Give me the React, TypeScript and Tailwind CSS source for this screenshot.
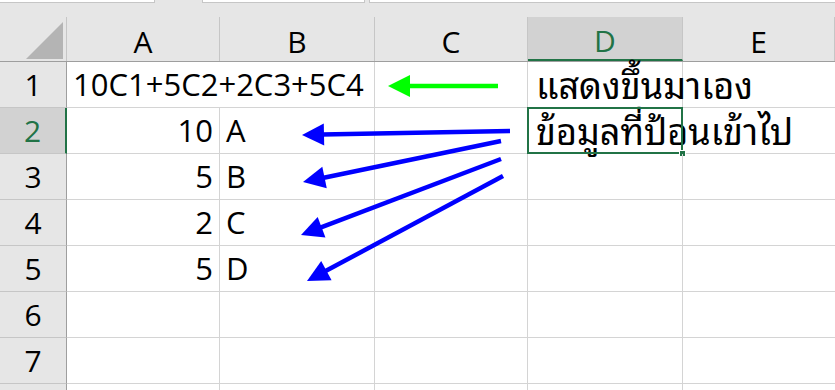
const font = { fontFamily: '"Open Sans", "Noto Sans Thai", "Noto Sans", Tahoma, sans-serif' };
const thaiFont = {
  fontFamily: '"Noto Sans Thai Looped", Tahoma, "Leelawadee UI", Loma, Garuda, "Noto Sans Thai", sans-serif',
};

const cols = ['A', 'B', 'C', 'D', 'E'];

type Row = { n: number; a?: string; b?: string; d?: string; aLeft?: boolean; hideNum?: boolean };

const rows: Row[] = [
  { n: 1, a: '10C1+5C2+2C3+5C4', aLeft: true, d: 'แสดงขึ้นมาเอง' },
  { n: 2, a: '10', b: 'A', d: 'ข้อมูลที่ป้อนเข้าไป' },
  { n: 3, a: '5', b: 'B' },
  { n: 4, a: '2', b: 'C' },
  { n: 5, a: '5', b: 'D' },
  { n: 6 },
  { n: 7 },
  { n: 8, hideNum: true },
];

function Arrow({ x1, y1, x2, y2, color }: { x1: number; y1: number; x2: number; y2: number; color: string }) {
  const dx = x2 - x1;
  const dy = y2 - y1;
  const len = Math.hypot(dx, dy);
  const ux = dx / len;
  const uy = dy / len;
  const L = 22;
  const W = 11;
  const bx = x2 - ux * L;
  const by = y2 - uy * L;
  const pts = `${x2},${y2} ${bx - uy * W},${by + ux * W} ${bx + uy * W},${by - ux * W}`;
  return (
    <g>
      <line x1={x1} y1={y1} x2={bx + ux * 2} y2={by + uy * 2} stroke={color} strokeWidth={4.5} />
      <polygon points={pts} fill={color} />
    </g>
  );
}

export default function App() {
  return (
    <div className="relative w-[835px] h-[390px] overflow-hidden bg-[#e6e6e6]" style={font}>
      {/* formula bar remnants */}
      <div className="flex h-[17px] items-start">
        <div className="w-[155px] h-[3px] bg-white border-b border-r border-[#c6c6c6]" />
        <div className="w-[47px]" />
        <div className="w-[163px] h-[3px] bg-white border-b border-x border-[#c6c6c6]" />
        <div className="w-[4px]" />
        <div className="flex-1 h-[3px] bg-white border-b border-l border-[#c6c6c6]" />
      </div>

      {/* column headers */}
      <div className="grid grid-cols-[67px_153px_155px_153px_155px_1fr] h-[45px] border-b border-[#9e9e9e]">
        <div className="relative border-r border-[#c6c6c6]">
          <div className="absolute left-[26px] top-[5px] w-[37px] h-[37px] bg-[#b4b4b4] [clip-path:polygon(100%_0,100%_100%,0_100%)]" />
        </div>
        {cols.map((c) => (
          <div
            key={c}
            className={
              c === 'D'
                ? 'flex items-end justify-center pb-[3px] bg-[#d2d2d2] border-r border-[#c6c6c6] border-b-2 border-b-[#217346] text-[#217346] text-[30px] leading-none'
                : 'flex items-end justify-center pb-[4px] border-r border-[#c6c6c6] text-black text-[30px] leading-none'
            }
          >
            {c}
          </div>
        ))}
      </div>

      {/* body rows */}
      {rows.map((r) => (
        <div key={r.n} className="grid grid-cols-[67px_153px_155px_153px_155px_1fr] h-[46px] bg-white">
          <div
            className={
              r.n === 2
                ? 'flex items-end justify-center pb-[7px] bg-[#d2d2d2] border-b border-[#c6c6c6] border-r-2 border-r-[#217346] text-[#217346] text-[30px] leading-none'
                : 'flex items-end justify-center pb-[7px] bg-[#e6e6e6] border-b border-[#c6c6c6] border-r border-r-[#9e9e9e] text-black text-[30px] leading-none'
            }
          >
            {!r.hideNum && r.n}
          </div>
          <div
            className={
              r.aLeft
                ? 'relative z-10 flex items-end pl-[6px] pb-[7px] border-b border-[#d4d4d4] text-[31px] leading-none whitespace-nowrap'
                : 'flex items-end justify-end pr-[6px] pb-[7px] border-b border-r border-[#d4d4d4] text-[31px] leading-none whitespace-nowrap'
            }
          >
            {r.a}
          </div>
          <div
            className={
              r.aLeft
                ? 'border-b border-r border-[#d4d4d4]'
                : 'flex items-end pl-[6px] pb-[7px] border-b border-r border-[#d4d4d4] text-[31px] leading-none'
            }
          >
            {!r.aLeft && r.b}
          </div>
          <div className="border-b border-r border-[#d4d4d4]" />
          <div
            className="relative z-10 flex items-end pl-[8px] pb-[6px] border-b border-r border-[#d4d4d4] text-[36px] leading-none whitespace-nowrap"
            style={thaiFont}
          >
            {r.d}
            {r.n === 2 && (
              <>
                <div className="absolute -left-[1px] -top-[1px] w-[156px] h-[47px] border-2 border-[#217346]" />
                <div className="absolute left-[151px] top-[42px] w-[7px] h-[7px] bg-[#217346] border border-white" />
              </>
            )}
          </div>
          <div className="border-b border-[#d4d4d4]" />
        </div>
      ))}

      {/* annotation arrows */}
      <svg className="absolute inset-0 z-20 pointer-events-none" width={835} height={390}>
        <Arrow x1={498} y1={86} x2={388} y2={86} color="#00ff00" />
        <Arrow x1={510} y1={131} x2={302} y2={135} color="#0000ff" />
        <Arrow x1={501} y1={141} x2={303} y2={182} color="#0000ff" />
        <Arrow x1={501} y1={159} x2={301} y2={235} color="#0000ff" />
        <Arrow x1={503} y1={176} x2={307} y2={281} color="#0000ff" />
      </svg>
    </div>
  );
}
